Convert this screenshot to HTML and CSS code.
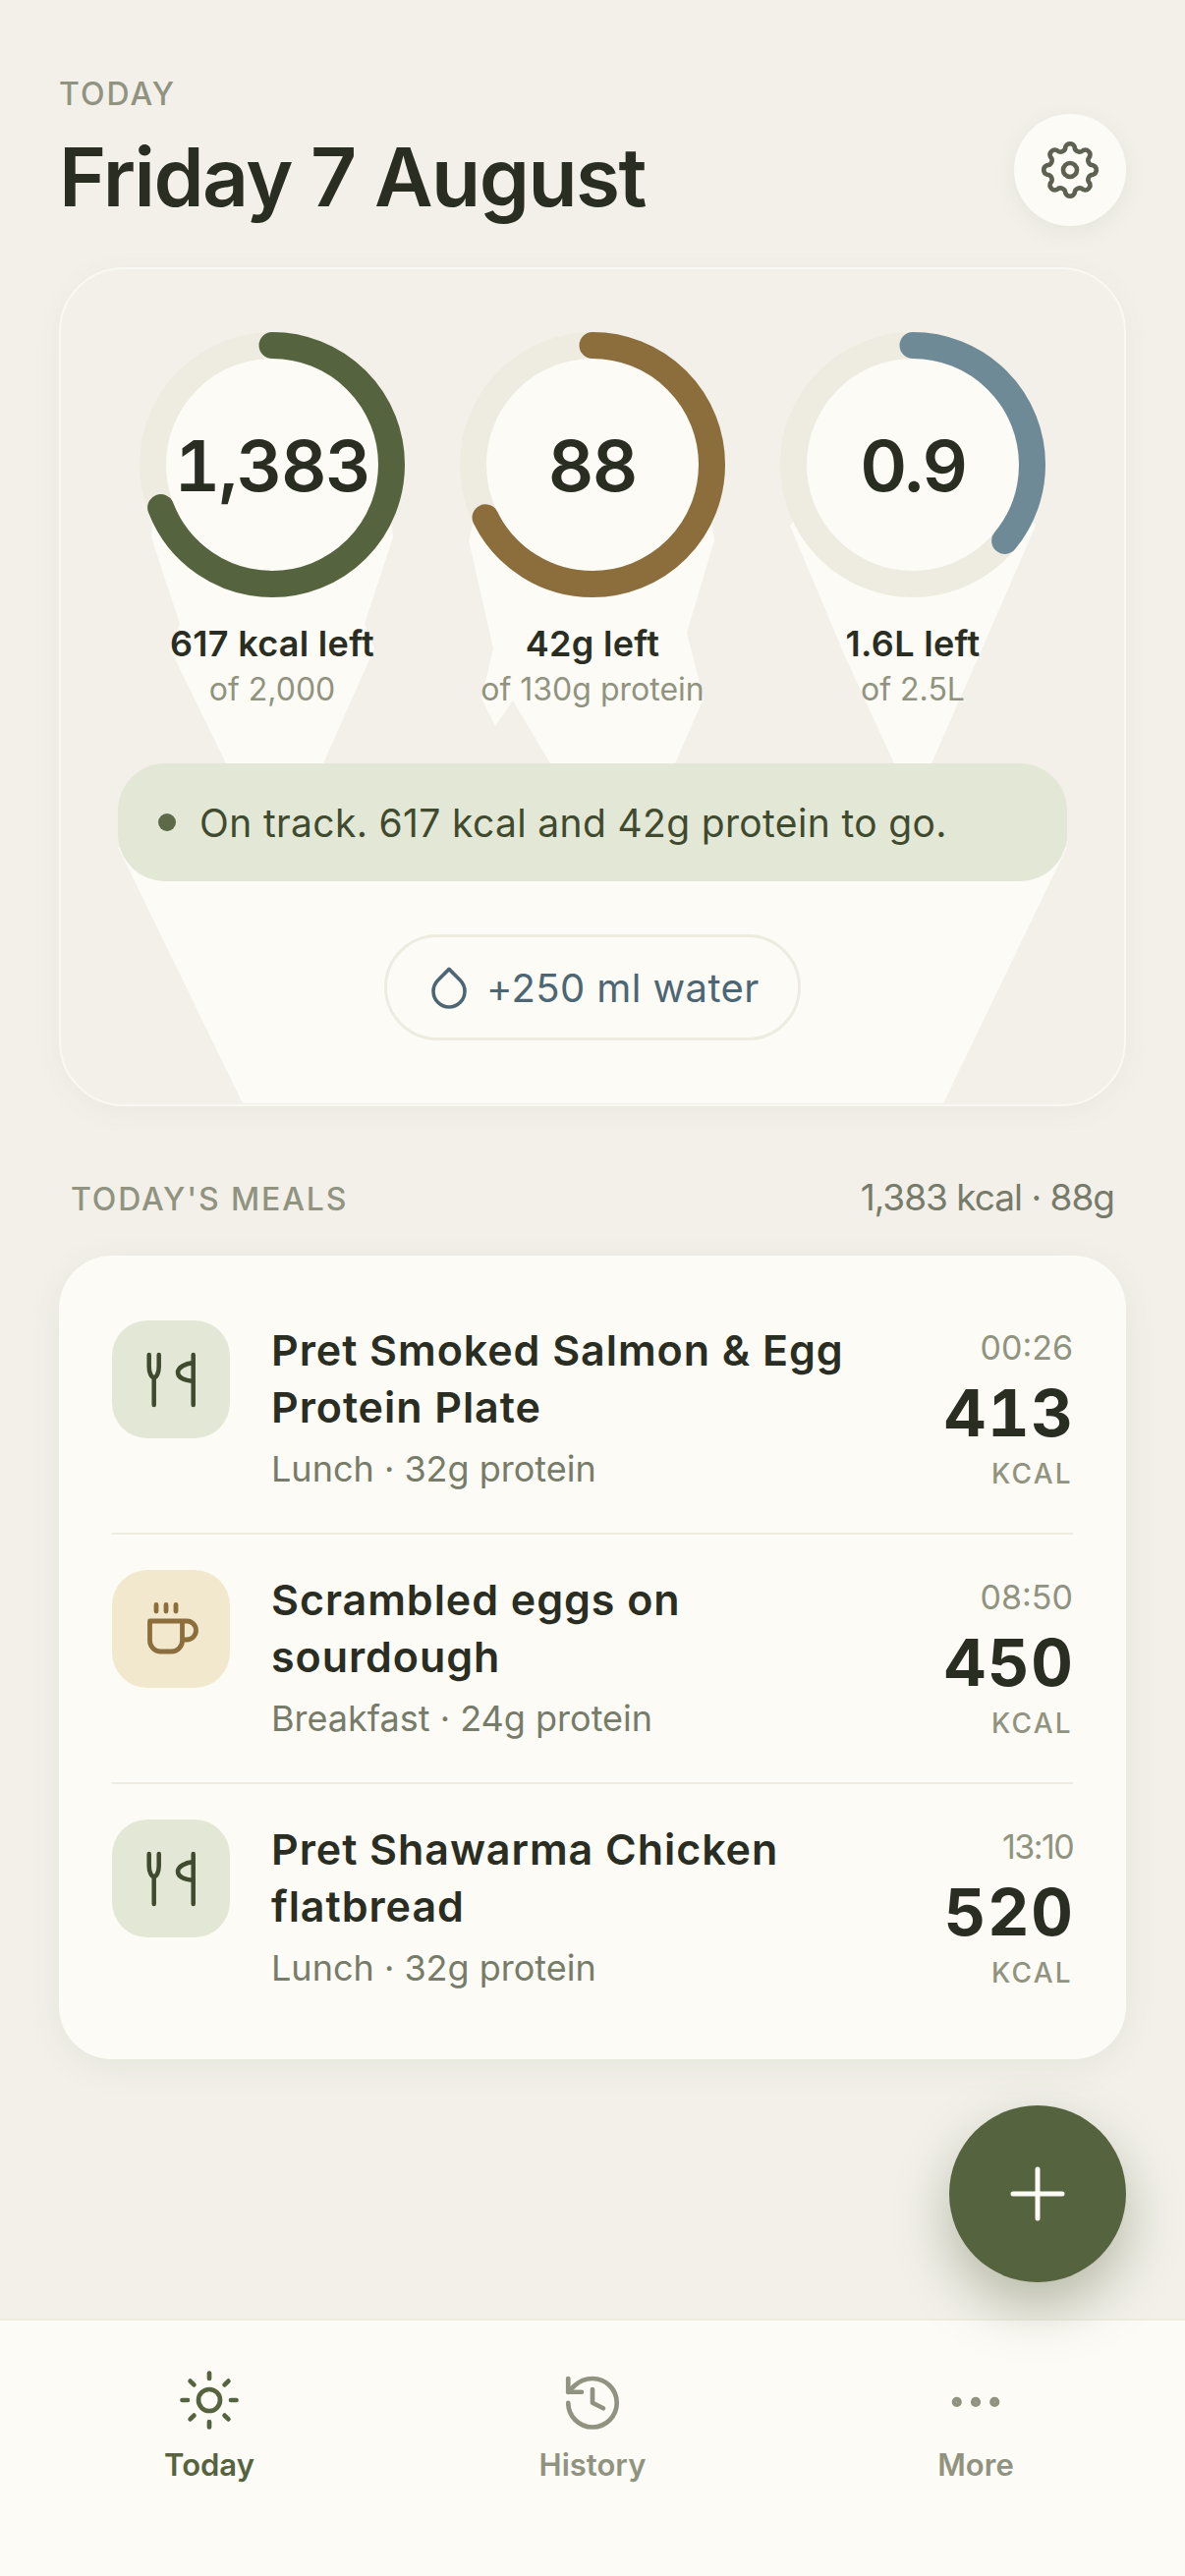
FILE: index.html
```html
<!DOCTYPE html>
<html lang="en">
<head>
<meta charset="utf-8">
<title>Today</title>
<link rel="stylesheet" href="styles.css">
</head>
<body>
<div class="app">
  <main class="main">
    <header class="header">
      <div>
        <div class="eyebrow">TODAY</div>
        <h1 class="title">Friday 7 August</h1>
      </div>
      <button class="gear-btn" aria-label="Settings">
        <svg class="gear-icon" viewBox="-32 -32 64 64" fill="none" stroke="#5d6152" stroke-width="4.6">
          <path d="M-4.68-23.54A5 5 0 0 1 4.68-23.54A5 5 0 0 0 13.33-19.96A5 5 0 0 1 19.96-13.33A5 5 0 0 0 23.54-4.68A5 5 0 0 1 23.54 4.68A5 5 0 0 0 19.96 13.33A5 5 0 0 1 13.33 19.96A5 5 0 0 0 4.68 23.54A5 5 0 0 1-4.68 23.54A5 5 0 0 0-13.33 19.96A5 5 0 0 1-19.96 13.33A5 5 0 0 0-23.54 4.68A5 5 0 0 1-23.54-4.68A5 5 0 0 0-19.96-13.33A5 5 0 0 1-13.33-19.96A5 5 0 0 0-4.68-23.54Z"/>
          <circle r="7"/>
        </svg>
      </button>
    </header>

    <section class="summary">
      <svg class="summary-bg" viewBox="60 272 1086 853" preserveAspectRatio="none" aria-hidden="true">
        <polygon points="156,530 398,530 400,547 371,635 381,660 329,777 230,777 173,660 183,635 154,547"/>
        <polygon points="482,530 724,530 727,550 699,644 716,711 687,777 560,777 522,713 504,739 490,711 502,660 477,550"/>
        <polygon points="808,530 1050,530 1054,535 996,668 948,777 910,777 860,668 804,535"/>
        <polygon points="120,862 1086,862 960,1123 247,1123"/>
      </svg>
      <div class="rings">
        <div class="ring-col">
          <div class="ring">
            <svg class="ring-svg" viewBox="0 0 270 270">
              <circle class="ring-track" cx="135" cy="135" r="121.5"/>
              <circle class="ring-fill ring-green" cx="135" cy="135" r="121.5" pathLength="100" stroke-dasharray="69.15 100" transform="rotate(-90 135 135)"/>
            </svg>
            <div class="ring-value v-kcal">1,383</div>
          </div>
          <div class="ring-label">617 kcal left</div>
          <div class="ring-sub">of 2,000</div>
        </div>
        <div class="ring-col">
          <div class="ring">
            <svg class="ring-svg" viewBox="0 0 270 270">
              <circle class="ring-track" cx="135" cy="135" r="121.5"/>
              <circle class="ring-fill ring-brown" cx="135" cy="135" r="121.5" pathLength="100" stroke-dasharray="67.7 100" transform="rotate(-90 135 135)"/>
            </svg>
            <div class="ring-value">88</div>
          </div>
          <div class="ring-label">42g left</div>
          <div class="ring-sub">of 130g protein</div>
        </div>
        <div class="ring-col">
          <div class="ring">
            <svg class="ring-svg" viewBox="0 0 270 270">
              <circle class="ring-track" cx="135" cy="135" r="121.5"/>
              <circle class="ring-fill ring-blue" cx="135" cy="135" r="121.5" pathLength="100" stroke-dasharray="36 100" transform="rotate(-90 135 135)"/>
            </svg>
            <div class="ring-value v-water">0.9</div>
          </div>
          <div class="ring-label">1.6L left</div>
          <div class="ring-sub">of 2.5L</div>
        </div>
      </div>

      <div class="status">
        <span class="status-dot"></span>
        <span class="status-text">On track. 617 kcal and 42g protein to go.</span>
      </div>

      <button class="water-btn">
        <svg class="drop-icon" viewBox="0 0 24 24" fill="none" stroke="#4d6673" stroke-width="1.8" stroke-linejoin="round">
          <path d="M12 2.69l5.66 5.66a8 8 0 1 1-11.31 0z"/>
        </svg>
        <span class="water-text">+250 ml water</span>
      </button>
    </section>

    <div class="meals-head">
      <span class="meals-title">TODAY'S MEALS</span>
      <span class="meals-total">1,383 kcal · 88g</span>
    </div>

    <section class="meals">
      <article class="meal">
        <div class="tile tile-green">
          <svg class="tile-icon" viewBox="0 0 120 120" fill="none" stroke="#3f4a2f" stroke-width="4.5" stroke-linecap="round" stroke-linejoin="round">
            <path d="M37.700 35V47A5 11 0 0 0 42.700 58A5 11 0 0 0 47.700 47V35M42.700 58V86M82.700 35V86M82.700 43C74 44 67 48 67 53C67 58 74 61 82.700 62"/>
          </svg>
        </div>
        <div class="meal-body">
          <h2 class="meal-name">Pret Smoked Salmon &amp; Egg Protein Plate</h2>
          <p class="meal-sub">Lunch · 32g protein</p>
        </div>
        <div class="meal-side">
          <div class="meal-time">00:26</div>
          <div class="meal-kcal">413</div>
          <div class="meal-unit">KCAL</div>
        </div>
      </article>
      <article class="meal">
        <div class="tile tile-amber">
          <svg class="tile-icon" viewBox="0 0 120 120" fill="none" stroke="#8c6d3c" stroke-width="4.8" stroke-linecap="round" stroke-linejoin="round">
            <path d="M45 35.500V42M55 35.500V42M65 35.500V42"/>
            <path d="M38.500 52H71.500V72A11 11 0 0 1 60.500 83H49.500A11 11 0 0 1 38.500 72ZM71.500 52H76A9.500 9.500 0 0 1 76 71H71.500"/>
          </svg>
        </div>
        <div class="meal-body">
          <h2 class="meal-name">Scrambled eggs on sourdough</h2>
          <p class="meal-sub">Breakfast · 24g protein</p>
        </div>
        <div class="meal-side">
          <div class="meal-time">08:50</div>
          <div class="meal-kcal">450</div>
          <div class="meal-unit">KCAL</div>
        </div>
      </article>
      <article class="meal">
        <div class="tile tile-green">
          <svg class="tile-icon" viewBox="0 0 120 120" fill="none" stroke="#3f4a2f" stroke-width="4.5" stroke-linecap="round" stroke-linejoin="round">
            <path d="M37.700 35V47A5 11 0 0 0 42.700 58A5 11 0 0 0 47.700 47V35M42.700 58V86M82.700 35V86M82.700 43C74 44 67 48 67 53C67 58 74 61 82.700 62"/>
          </svg>
        </div>
        <div class="meal-body">
          <h2 class="meal-name">Pret Shawarma Chicken flatbread</h2>
          <p class="meal-sub">Lunch · 32g protein</p>
        </div>
        <div class="meal-side">
          <div class="meal-time t-narrow">13:10</div>
          <div class="meal-kcal">520</div>
          <div class="meal-unit">KCAL</div>
        </div>
      </article>
    </section>
  </main>

  <button class="fab" aria-label="Add">
    <svg class="fab-icon" viewBox="0 0 60 60" fill="none" stroke="#fbfaf5" stroke-width="5" stroke-linecap="round">
      <path d="M30 5V55M5 30H55"/>
    </svg>
  </button>

  <nav class="nav">
    <div class="nav-item nav-active">
      <svg class="nav-icon" viewBox="0 0 24 24" fill="none" stroke="currentColor" stroke-width="1.7" stroke-linecap="round" stroke-linejoin="round">
        <circle cx="12" cy="12" r="4"/>
        <path d="M12 2v2M12 20v2M4.930 4.930l1.410 1.410M17.660 17.660l1.410 1.410M2 12h2M20 12h2M6.340 17.660l-1.410 1.410M19.070 4.930l-1.410 1.410"/>
      </svg>
      <span class="nav-label">Today</span>
    </div>
    <div class="nav-item">
      <svg class="nav-icon" viewBox="0 -1 24 24" fill="none" stroke="currentColor" stroke-width="1.7" stroke-linecap="round" stroke-linejoin="round">
        <path d="M3 12a9 9 0 1 0 9-9 9.750 9.750 0 0 0-6.740 2.740L3 8"/>
        <path d="M3 3v5h5"/>
        <path d="M12 7v5l4 2"/>
      </svg>
      <span class="nav-label">History</span>
    </div>
    <div class="nav-item">
      <svg class="nav-icon" viewBox="0 -0.7 24 24" fill="none" stroke="currentColor" stroke-width="1.7">
        <circle cx="5" cy="12" r="1"/>
        <circle cx="12" cy="12" r="1"/>
        <circle cx="19" cy="12" r="1"/>
      </svg>
      <span class="nav-label">More</span>
    </div>
  </nav>
</div>
</body>
</html>
```

FILE: styles.css
```css
* { box-sizing: border-box; }
html, body { margin: 0; padding: 0; }
body {
  width: 1206px;
  height: 2622px;
  background: #f2f0e9;
  color: #2a2d22;
  font-family: "Inter", "Liberation Sans", sans-serif;
  overflow: hidden;
}
button { font: inherit; padding: 0; cursor: pointer; }
h1, h2, p { margin: 0; font-weight: inherit; }

.app {
  position: relative;
  width: 1206px;
  height: 2622px;
  display: flex;
  flex-direction: column;
}
.main { flex: 1; padding: 72px 60px 0; }

/* Header */
.header { display: flex; justify-content: space-between; align-items: flex-start; margin-bottom: 42px; }
.eyebrow { font-size: 32px; line-height: 48px; letter-spacing: 2px; color: #90937f; font-weight: 500; }
.title { margin-top: 13px; font-size: 82px; line-height: 96px; font-weight: 600; letter-spacing: -1.55px; color: #2a2d22; }
.gear-btn {
  width: 114px; height: 114px; margin-top: 44px;
  border: 0; border-radius: 50%;
  background: #fcfbf6;
  box-shadow: 0 6px 24px rgba(90, 95, 60, 0.07);
  display: flex; align-items: center; justify-content: center;
}
.gear-icon { width: 64px; height: 64px; }

/* Summary card */
.summary {
  position: relative;
  border: 2px solid #f9f8f2;
  border-radius: 66px;
  padding: 64px 58px 65px;
  background: #f2f0e9;
  box-shadow: 0 6px 30px rgba(90, 95, 60, 0.05);
  display: flex; flex-direction: column; align-items: center;
}
.summary-bg { position: absolute; left: -2px; top: -2px; width: 1086px; height: 853px; fill: #fcfbf6; }
.rings { position: relative; width: 100%; display: grid; grid-template-columns: repeat(3, 314px); gap: 12px; }
.ring-col { display: flex; flex-direction: column; align-items: center; }
.ring { position: relative; width: 270px; height: 270px; }
.ring-svg { display: block; width: 270px; height: 270px; }
.ring-track { fill: #fcfbf6; stroke: #eeece1; stroke-width: 27; }
.ring-fill { fill: none; stroke-width: 27; stroke-linecap: round; }
.ring-green { stroke: #56633f; }
.ring-brown { stroke: #8c6d3c; }
.ring-blue { stroke: #6f8a97; }
.ring-value {
  position: absolute; inset: 0;
  display: flex; align-items: center; justify-content: center;
  font-size: 72px; font-weight: 600; letter-spacing: -1px; color: #2a2d22;
}
.v-kcal { font-variant-numeric: tabular-nums; letter-spacing: -1.3px; }
.v-water { letter-spacing: -2.3px; }
.ring-label { margin-top: 23px; font-size: 36px; line-height: 48px; font-weight: 600; letter-spacing: 0.3px; white-space: nowrap; }
.ring-sub { margin-top: 2px; font-size: 32px; line-height: 42px; color: #90937f; white-space: nowrap; }

.status {
  position: relative;
  align-self: stretch;
  margin-top: 54px; height: 120px;
  border-radius: 48px;
  background: #e3e8d6;
  padding-left: 41px;
  display: flex; align-items: center; gap: 24px;
}
.status-dot { width: 18px; height: 18px; border-radius: 50%; background: #5d6a48; flex: none; }
.status-text { font-size: 39px; letter-spacing: 0.35px; color: #3f4a2f; white-space: nowrap; }

.water-btn {
  position: relative;
  margin-top: 54px; height: 108px; width: 424px;
  border: 3px solid #eeece1; border-radius: 54px;
  background: #fcfbf6;
  display: flex; align-items: center; justify-content: flex-start;
  padding-left: 39px; gap: 14px;
  color: #4d6673;
}
.drop-icon { width: 48px; height: 48px; flex: none; }
.water-text { font-size: 40px; letter-spacing: 0.4px; white-space: nowrap; }

/* Meals */
.meals-head {
  display: flex; justify-content: space-between; align-items: baseline;
  margin-top: 69px; padding: 0 12px;
  line-height: 48px;
}
.meals-title { font-size: 32px; font-weight: 500; letter-spacing: 1.85px; color: #90937f; }
.meals-total { font-size: 37px; letter-spacing: -1px; color: #777b69; }

.meals {
  margin-top: 33px;
  padding: 30px 54px 28px;
  border-radius: 54px;
  background: #fcfbf6;
  box-shadow: 0 8px 36px rgba(90, 95, 60, 0.07);
}
.meal { display: flex; align-items: flex-start; padding: 36px 0 38px; }
.meal + .meal { border-top: 2px solid #eeece1; }
.tile { width: 120px; height: 120px; border-radius: 36px; flex: none; }
.tile-green { background: #e3e8d6; }
.tile-amber { background: #f2e8ce; }
.tile-icon { display: block; width: 120px; height: 120px; }
.meal-body { flex: 1; margin-left: 42px; padding-top: 1px; max-width: 600px; }
.meal-name { font-size: 43px; line-height: 58px; font-weight: 600; letter-spacing: 0.95px; color: #2a2d22; }
.meal-sub { margin-top: 7px; font-size: 36px; line-height: 54px; color: #777b69; }
.meal-side { margin-left: auto; text-align: right; }
.meal-time { margin-top: 4px; font-size: 34px; line-height: 48px; color: #90937f; }
.t-narrow { letter-spacing: -1.6px; }
.meal-kcal { margin-top: 6px; margin-right: -1.6px; font-size: 66px; line-height: 72px; font-weight: 700; letter-spacing: 1.6px; font-variant-numeric: tabular-nums; color: #2a2d22; }
.meal-unit { margin-top: 8px; font-size: 28px; line-height: 36px; font-weight: 500; letter-spacing: 2.3px; color: #90937f; }

/* FAB */
.fab {
  position: absolute; left: 966px; top: 2143px; z-index: 2;
  width: 180px; height: 180px;
  border: 0; border-radius: 50%;
  background: #56633f;
  box-shadow: 0 24px 54px rgba(86, 99, 63, 0.38);
  display: flex; align-items: center; justify-content: center;
}
.fab-icon { width: 60px; height: 60px; }

/* Nav */
.nav {
  height: 262px;
  border-top: 2px solid #eeece1;
  background: #fcfbf6;
  padding: 48px 18px 0;
  display: flex;
}
.nav-item { width: 390px; display: flex; flex-direction: column; align-items: center; color: #90937f; }
.nav-active { color: #56633f; }
.nav-icon { width: 66px; height: 66px; display: block; }
.nav-label { margin-top: 15px; font-size: 31px; line-height: 36px; font-weight: 600; }
```
